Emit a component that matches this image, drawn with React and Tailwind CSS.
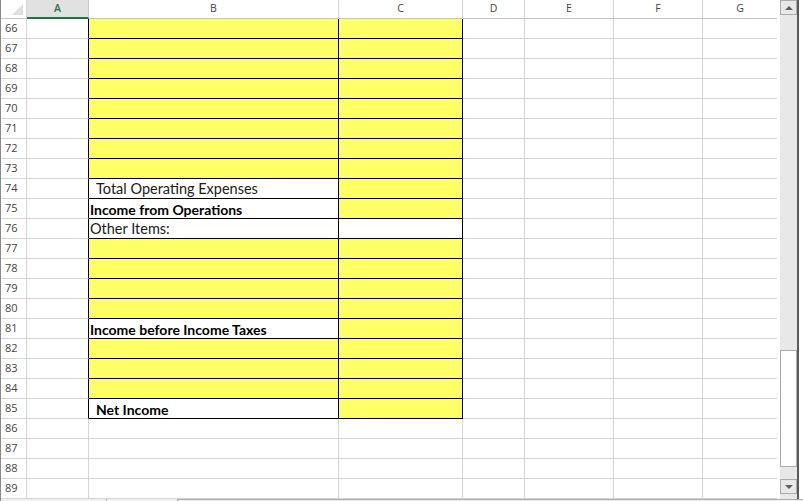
import React from 'react';

const COLS = [
  { key: 'A', w: 62 },
  { key: 'B', w: 250 },
  { key: 'C', w: 124 },
  { key: 'D', w: 62 },
  { key: 'E', w: 89 },
  { key: 'F', w: 89 },
  { key: 'G', w: 75 },
];

// b: B cell content, bFill/cFill: yellow fill, boxed: black borders on B & C
const yellow = { bFill: true, cFill: true, boxed: true };
const ROWS = [
  { n: 66, ...yellow },
  { n: 67, ...yellow },
  { n: 68, ...yellow },
  { n: 69, ...yellow },
  { n: 70, ...yellow },
  { n: 71, ...yellow },
  { n: 72, ...yellow },
  { n: 73, ...yellow },
  { n: 74, boxed: true, cFill: true, b: 'Total Operating Expenses', indent: true },
  { n: 75, boxed: true, cFill: true, b: 'Income from Operations', bold: true },
  { n: 76, boxed: true, b: 'Other Items:' },
  { n: 77, ...yellow },
  { n: 78, ...yellow },
  { n: 79, ...yellow },
  { n: 80, ...yellow },
  { n: 81, boxed: true, cFill: true, b: 'Income before Income Taxes', bold: true },
  { n: 82, ...yellow },
  { n: 83, ...yellow },
  { n: 84, ...yellow },
  { n: 85, boxed: true, cFill: true, b: 'Net Income', bold: true, indent: true },
  { n: 86 },
  { n: 87 },
  { n: 88 },
  { n: 89 },
];

function HeaderRow() {
  return (
    <div className="flex h-[19px] border-b border-[#c6c6c6] font-['Open_Sans',sans-serif]">
      <div className="relative w-[26px] shrink-0 border-r border-[#d4d4d4] bg-white">
        <div className="absolute right-[3px] bottom-[3px] w-0 h-0 border-l-[11px] border-l-transparent border-b-[11px] border-b-[#dfdfdf]" />
      </div>
      {COLS.map((c) =>
        c.key === 'A' ? (
          <div
            key={c.key}
            style={{ width: c.w }}
            className="shrink-0 flex items-center justify-center bg-[#e1e1e1] border-r border-[#c6c6c6] border-b-2 border-b-[#217346] -mb-px text-[10.5px] text-[#217346] font-semibold"
          >
            {c.key}
          </div>
        ) : (
          <div
            key={c.key}
            style={{ width: c.w }}
            className="shrink-0 flex items-center justify-center border-r border-[#d4d4d4] text-[10.5px] text-[#444]"
          >
            {c.key}
          </div>
        )
      )}
    </div>
  );
}

function Row({ r }) {
  return (
    <div className="flex h-[20px] text-black">
      <div className="w-[26px] shrink-0 flex items-center pl-[4px] border-r border-b border-[#d4d4d4] text-[11px] text-[#444] font-['Open_Sans',sans-serif]">
        {r.n}
      </div>
      <div className={`w-[62px] shrink-0 border-b border-[#d4d4d4] border-r ${r.boxed ? 'border-r-black' : 'border-r-[#d4d4d4]'}`} />
      <div
        className={`w-[250px] shrink-0 flex items-center pt-[1px] overflow-hidden whitespace-nowrap ${r.boxed ? 'border-r border-b border-black' : 'border-r border-b border-[#d4d4d4]'} ${r.bFill ? 'bg-[#ffff66]' : 'bg-white'} ${r.indent ? 'pl-[7px]' : 'pl-[1px]'} ${r.bold ? 'font-bold text-[14px]' : 'text-[14.5px] text-[#1a1a1a]'}`}
      >
        {r.b}
      </div>
      <div className={`w-[124px] shrink-0 ${r.boxed ? 'border-r border-b border-black' : 'border-r border-b border-[#d4d4d4]'} ${r.cFill ? 'bg-[#ffff66]' : 'bg-white'}`} />
      {COLS.slice(3).map((c) => (
        <div key={c.key} style={{ width: c.w }} className="shrink-0 border-r border-b border-[#d4d4d4]" />
      ))}
    </div>
  );
}

function ScrollBar() {
  return (
    <div className="w-[17px] h-[499px] bg-[#e8e8e8] flex flex-col relative">
      <div className="h-[15px] border border-[#ababab] bg-[#e8e8e8] flex items-center justify-center">
        <div className="w-0 h-0 border-l-[4px] border-l-transparent border-r-[4px] border-r-transparent border-b-[4px] border-b-[#606060]" />
      </div>
      <div className="h-[335px]" />
      <div className="h-[117px] bg-white border border-[#ababab]" />
      <div className="h-[12px]" />
      <div className="h-[15px] border border-[#ababab] bg-[#e8e8e8] flex items-center justify-center">
        <div className="w-0 h-0 border-l-[4px] border-l-transparent border-r-[4px] border-r-transparent border-t-[4px] border-t-[#606060]" />
      </div>
    </div>
  );
}

export default function App() {
  return (
    <div className="w-[803px] h-[501px] overflow-hidden bg-white font-['Lato',sans-serif]">
      <div className="flex">
        <div className="w-[777px] border-l border-[#8a8a8a] shrink-0">
          <HeaderRow />
          {ROWS.map((r) => (
            <Row key={r.n} r={r} />
          ))}
        </div>
        <div className="w-[3px] shrink-0 bg-white" />
        <ScrollBar />
        <div className="w-[2px] h-[499px] bg-[#5a5a5a]" />
      </div>
      <div className="flex h-[2px] bg-[#f0f0f0] border-l border-[#8a8a8a]">
        <div className="w-[106px] border-r border-[#ababab]" />
        <div className="w-[70px]" />
        <div className="flex-1 border-l border-t border-[#ababab]" />
      </div>
    </div>
  );
}
